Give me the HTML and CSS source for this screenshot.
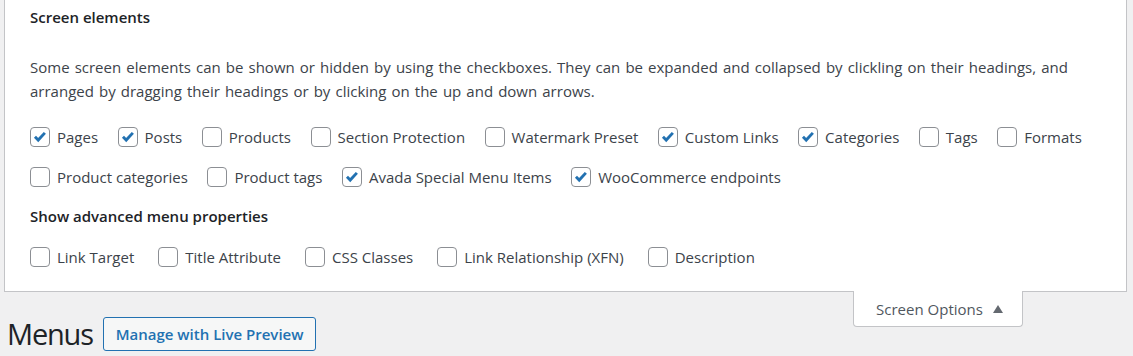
FILE: index.html
```html
<!DOCTYPE html>
<html lang="en">
<head>
<meta charset="utf-8">
<title>Menus</title>
<link rel="stylesheet" href="styles.css">
</head>
<body>
<div class="screen-meta">
  <section class="prefs">
    <h5 class="prefs-title">Screen elements</h5>
    <p class="prefs-desc">Some screen elements can be shown or hidden by using the checkboxes. They can be expanded and collapsed by clickling on their headings, and arranged by dragging their headings or by clicking on the up and down arrows.</p>
    <div class="opts">
      <label class="opt"><span class="cb on"><svg viewBox="0 0 20 20"><path d="M4.4 9.8l3.6 3.6 7.4-8"/></svg></span>Pages</label>
      <label class="opt"><span class="cb on"><svg viewBox="0 0 20 20"><path d="M4.4 9.8l3.6 3.6 7.4-8"/></svg></span>Posts</label>
      <label class="opt"><span class="cb"></span>Products</label>
      <label class="opt"><span class="cb"></span>Section Protection</label>
      <label class="opt"><span class="cb"></span>Watermark Preset</label>
      <label class="opt"><span class="cb on"><svg viewBox="0 0 20 20"><path d="M4.4 9.8l3.6 3.6 7.4-8"/></svg></span>Custom Links</label>
      <label class="opt"><span class="cb on"><svg viewBox="0 0 20 20"><path d="M4.4 9.8l3.6 3.6 7.4-8"/></svg></span>Categories</label>
      <label class="opt"><span class="cb"></span>Tags</label>
      <label class="opt"><span class="cb"></span>Formats</label>
      <label class="opt"><span class="cb"></span>Product categories</label>
      <label class="opt"><span class="cb"></span>Product tags</label>
      <label class="opt"><span class="cb on"><svg viewBox="0 0 20 20"><path d="M4.4 9.8l3.6 3.6 7.4-8"/></svg></span>Avada Special Menu Items</label>
      <label class="opt"><span class="cb on"><svg viewBox="0 0 20 20"><path d="M4.4 9.8l3.6 3.6 7.4-8"/></svg></span>WooCommerce endpoints</label>
    </div>
  </section>
  <section class="prefs adv">
    <h5 class="prefs-title">Show advanced menu properties</h5>
    <div class="opts">
      <label class="opt"><span class="cb"></span>Link Target</label>
      <label class="opt"><span class="cb"></span>Title Attribute</label>
      <label class="opt"><span class="cb"></span>CSS Classes</label>
      <label class="opt"><span class="cb"></span>Link Relationship (XFN)</label>
      <label class="opt"><span class="cb"></span>Description</label>
    </div>
  </section>
</div>
<div class="meta-links">
  <button class="meta-toggle" type="button">Screen Options <span class="arrow"></span></button>
</div>
<div class="title-row">
  <h1 class="page-title">Menus</h1>
  <a class="title-action" href="#">Manage with Live Preview</a>
</div>
</body>
</html>
```
FILE: styles.css
```css
html, body {
  margin: 0;
  padding: 0;
}
body {
  background: #f0f0f1;
  color: #3c434a;
  font-family: "Open Sans", "Noto Sans", sans-serif;
  font-size: 15px;
  width: 1133px;
  height: 356px;
  overflow: hidden;
}
.screen-meta {
  background: #fff;
  border: 1px solid #c3c4c7;
  border-top: none;
  margin: 0 6px 0 4px;
  padding: 5px 25px 14px 25px;
}
.prefs-title {
  margin: 0;
  height: 24px;
  font-size: 15px;
  line-height: 24px;
  font-weight: 600;
  color: #1d2327;
}
.prefs-desc {
  margin: 26px 0 0;
  line-height: 24px;
  word-spacing: 1.2px;
  color: #3c434a;
}
.opts {
  display: flex;
  flex-wrap: wrap;
  column-gap: 19.5px;
  margin-top: 14px;
}
.adv .prefs-title {
  margin-top: 7px;
}
.adv .opts {
  margin-top: 9px;
  column-gap: 24px;
}
.opt {
  display: flex;
  align-items: center;
  gap: 7px;
  height: 40px;
  line-height: 20px;
  color: #3c434a;
}
.cb {
  box-sizing: border-box;
  width: 20px;
  height: 20px;
  border: 1px solid #8c8f94;
  border-radius: 4px;
  background: #fff;
  display: inline-flex;
  flex: none;
}
.cb svg {
  width: 18px;
  height: 18px;
  fill: none;
  stroke: #2271b1;
  stroke-width: 3.2;
  stroke-linecap: butt;
  stroke-linejoin: miter;
}
.meta-links {
  float: right;
  margin-right: 110px;
}
.meta-toggle {
  box-sizing: border-box;
  width: 170px;
  height: 36px;
  margin-top: -1px;
  background: #fff;
  border: 1px solid #c3c4c7;
  border-top: none;
  border-radius: 0 0 4px 4px;
  font: inherit;
  color: #50575e;
  display: flex;
  align-items: center;
  justify-content: center;
  gap: 10px;
  padding: 0 0 0 3px;
}
.arrow {
  width: 0;
  height: 0;
  border-left: 5px solid transparent;
  border-right: 5px solid transparent;
  border-bottom: 8px solid #646970;
}
.title-row {
  display: flex;
  align-items: center;
  gap: 10px;
  padding: 25px 0 0 7px;
}
.page-title {
  margin: 0;
  font-size: 29px;
  font-weight: 400;
  letter-spacing: -1.2px;
  color: #1d2327;
  line-height: 34px;
}
.title-action {
  box-sizing: border-box;
  height: 34px;
  padding: 0 12px;
  display: flex;
  align-items: center;
  border: 1px solid #2271b1;
  border-radius: 3px;
  background: #f6f7f7;
  color: #2271b1;
  font-weight: 600;
  text-decoration: none;
}
```
